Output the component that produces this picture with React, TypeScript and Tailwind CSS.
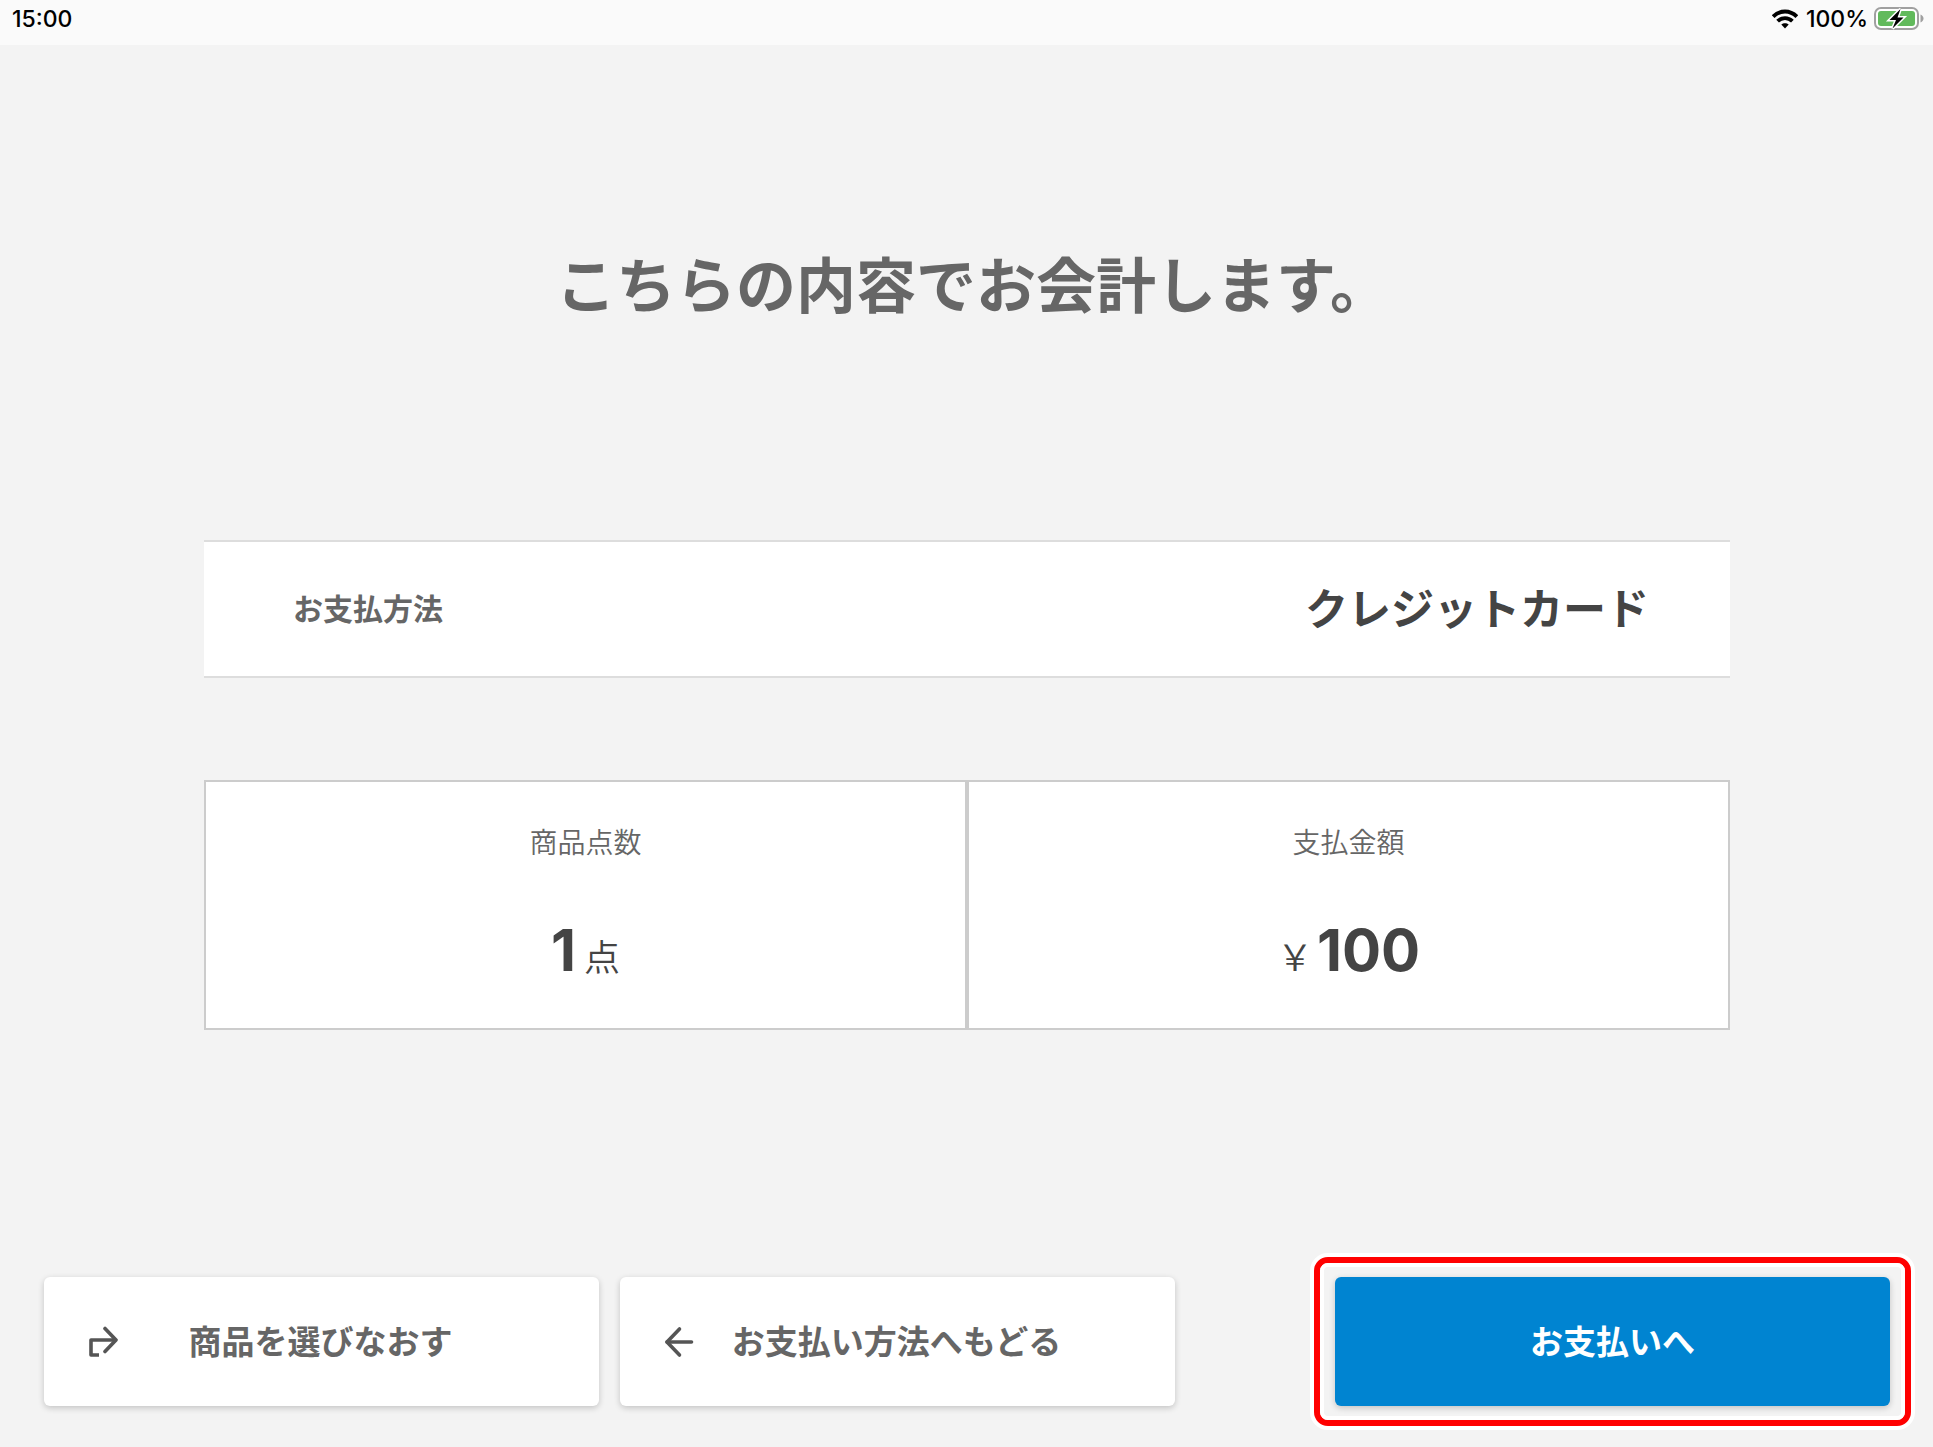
const StatusBar = () => {
  return (
    <header className="flex h-[45px] items-center justify-between bg-[#fafafa] pr-[9px] pb-2 pl-3 text-black">
      <time className="text-[23px] leading-9 font-medium">15:00</time>

      <div className="flex items-center gap-1.5">
        <svg className="mr-0.5" width="26" height="20" viewBox="0 0 26 20" role="img" aria-label="Wi-Fi">
          <g fill="none" stroke="black" strokeWidth="3.8">
            <path d="M1.2 7.6C8 .8 18 .8 24.8 7.6" />
            <path d="M5.6 12.2C9.8 8 16.2 8 20.4 12.2" />
          </g>
          <path d="M13 19.4L9.3 15.6C11.4 13.8 14.6 13.8 16.7 15.6Z" fill="black" />
        </svg>
        <span className="text-[23px] leading-9 font-medium">100%</span>
        <svg width="50" height="24" viewBox="0 0 50 24" role="img" aria-label="充電中">
          <rect x="1" y="1" width="43" height="21" rx="6" fill="white" stroke="#a0a0a0" strokeWidth="2" />
          <rect x="4" y="4" width="37" height="15" rx="3" fill="#62ba5c" />
          <path d="M46.5 7.5C50.5 9 50.5 14 46.5 15.5Z" fill="#a0a0a0" />
          <path
            d="M26.5 2L15.5 13H22L18.5 21.5L29.5 10.5H23.5Z"
            fill="black"
            stroke="white"
            strokeWidth="3"
            paintOrder="stroke"
          />
        </svg>
      </div>
    </header>
  );
};

const RestartIcon = () => (
  <svg className="size-8" viewBox="0 0 32 32" fill="none" stroke="currentColor" strokeWidth="3.6" strokeLinejoin="round" aria-hidden="true">
    <path d="M12 29H4V14H28" />
    <path d="M18 2.5L29 14L18 25.5" strokeLinecap="round" />
  </svg>
);

const BackIcon = () => (
  <svg className="size-8" viewBox="0 0 32 32" fill="none" stroke="currentColor" strokeWidth="3.6" strokeLinecap="round" strokeLinejoin="round" aria-hidden="true">
    <path d="M28.5 16H4" />
    <path d="M16.5 3L4 16L16.5 29" />
  </svg>
);

export default function App() {
  return (
    <div className="flex min-h-screen flex-col bg-[#f3f3f3] font-['Inter','Noto_Sans_CJK_JP',sans-serif] text-[#666]">
      <StatusBar />

      <main className="flex flex-1 flex-col pt-[197px] pr-[203px] pl-[204px]">
        <h1 className="pl-3 text-center text-[60px] leading-[88px] font-bold">
          こちらの内容でお会計します。
        </h1>

        <section className="mt-[210px] flex h-[138px] items-center justify-between border-y-2 border-[#ddd] bg-white pr-[81px] pl-[89px]">
          <h2 className="text-[30px] leading-[44px] font-bold">お支払方法</h2>
          <p className="text-[43px] leading-[64px] font-bold text-[#444]">クレジットカード</p>
        </section>

        <section className="mt-[102px] grid grid-cols-2 gap-1 border-2 border-[#ccc] bg-[#ccc] text-center">
          <div className="bg-white pt-[39px] pb-[30px]">
            <h2 className="text-[28px] leading-[44px] font-[350]">商品点数</h2>
            <p className="mt-[45px] text-[58px] leading-[80px] font-bold text-[#444]">
              1<span className="ml-2 text-[36px] font-[350]">点</span>
            </p>
          </div>
          <div className="bg-white pt-[39px] pb-[30px]">
            <h2 className="text-[28px] leading-[44px] font-[350]">支払金額</h2>
            <p className="mt-[45px] text-[58px] leading-[80px] font-bold text-[#444]">
              <span className="mr-1 text-[36px] font-[350]">￥</span>100
            </p>
          </div>
        </section>
      </main>

      <footer className="flex gap-[21px] pr-[43px] pb-[41px] pl-[44px] text-[33px] leading-[48px] font-bold">
        <button className="flex h-[129px] w-[555px] items-center rounded-md bg-white px-[43px] shadow-[0_2px_6px_rgba(0,0,0,0.2)]">
          <span className="text-[#555]"><RestartIcon /></span>
          <span className="flex-1 pr-[34px]">商品を選びなおす</span>
        </button>
        <button className="flex h-[129px] w-[555px] items-center rounded-md bg-white px-[43px] shadow-[0_2px_6px_rgba(0,0,0,0.2)]">
          <span className="text-[#555]"><BackIcon /></span>
          <span className="flex-1 pr-[34px]">お支払い方法へもどる</span>
        </button>

        <div className="relative ml-auto">
          <button className="h-[129px] w-[555px] rounded-md bg-[#0084d1] text-white shadow-[0_2px_6px_rgba(0,0,0,0.2)]">
            お支払いへ
          </button>
          {/* highlight frame around the next step */}
          <div className="pointer-events-none absolute -inset-x-[25px] -inset-y-6 rounded-[18px] border-4 border-white">
            <div className="h-full rounded-[14px] border-6 border-[#f00]">
              <div className="h-full rounded-lg border-4 border-white"></div>
            </div>
          </div>
        </div>
      </footer>
    </div>
  );
}
